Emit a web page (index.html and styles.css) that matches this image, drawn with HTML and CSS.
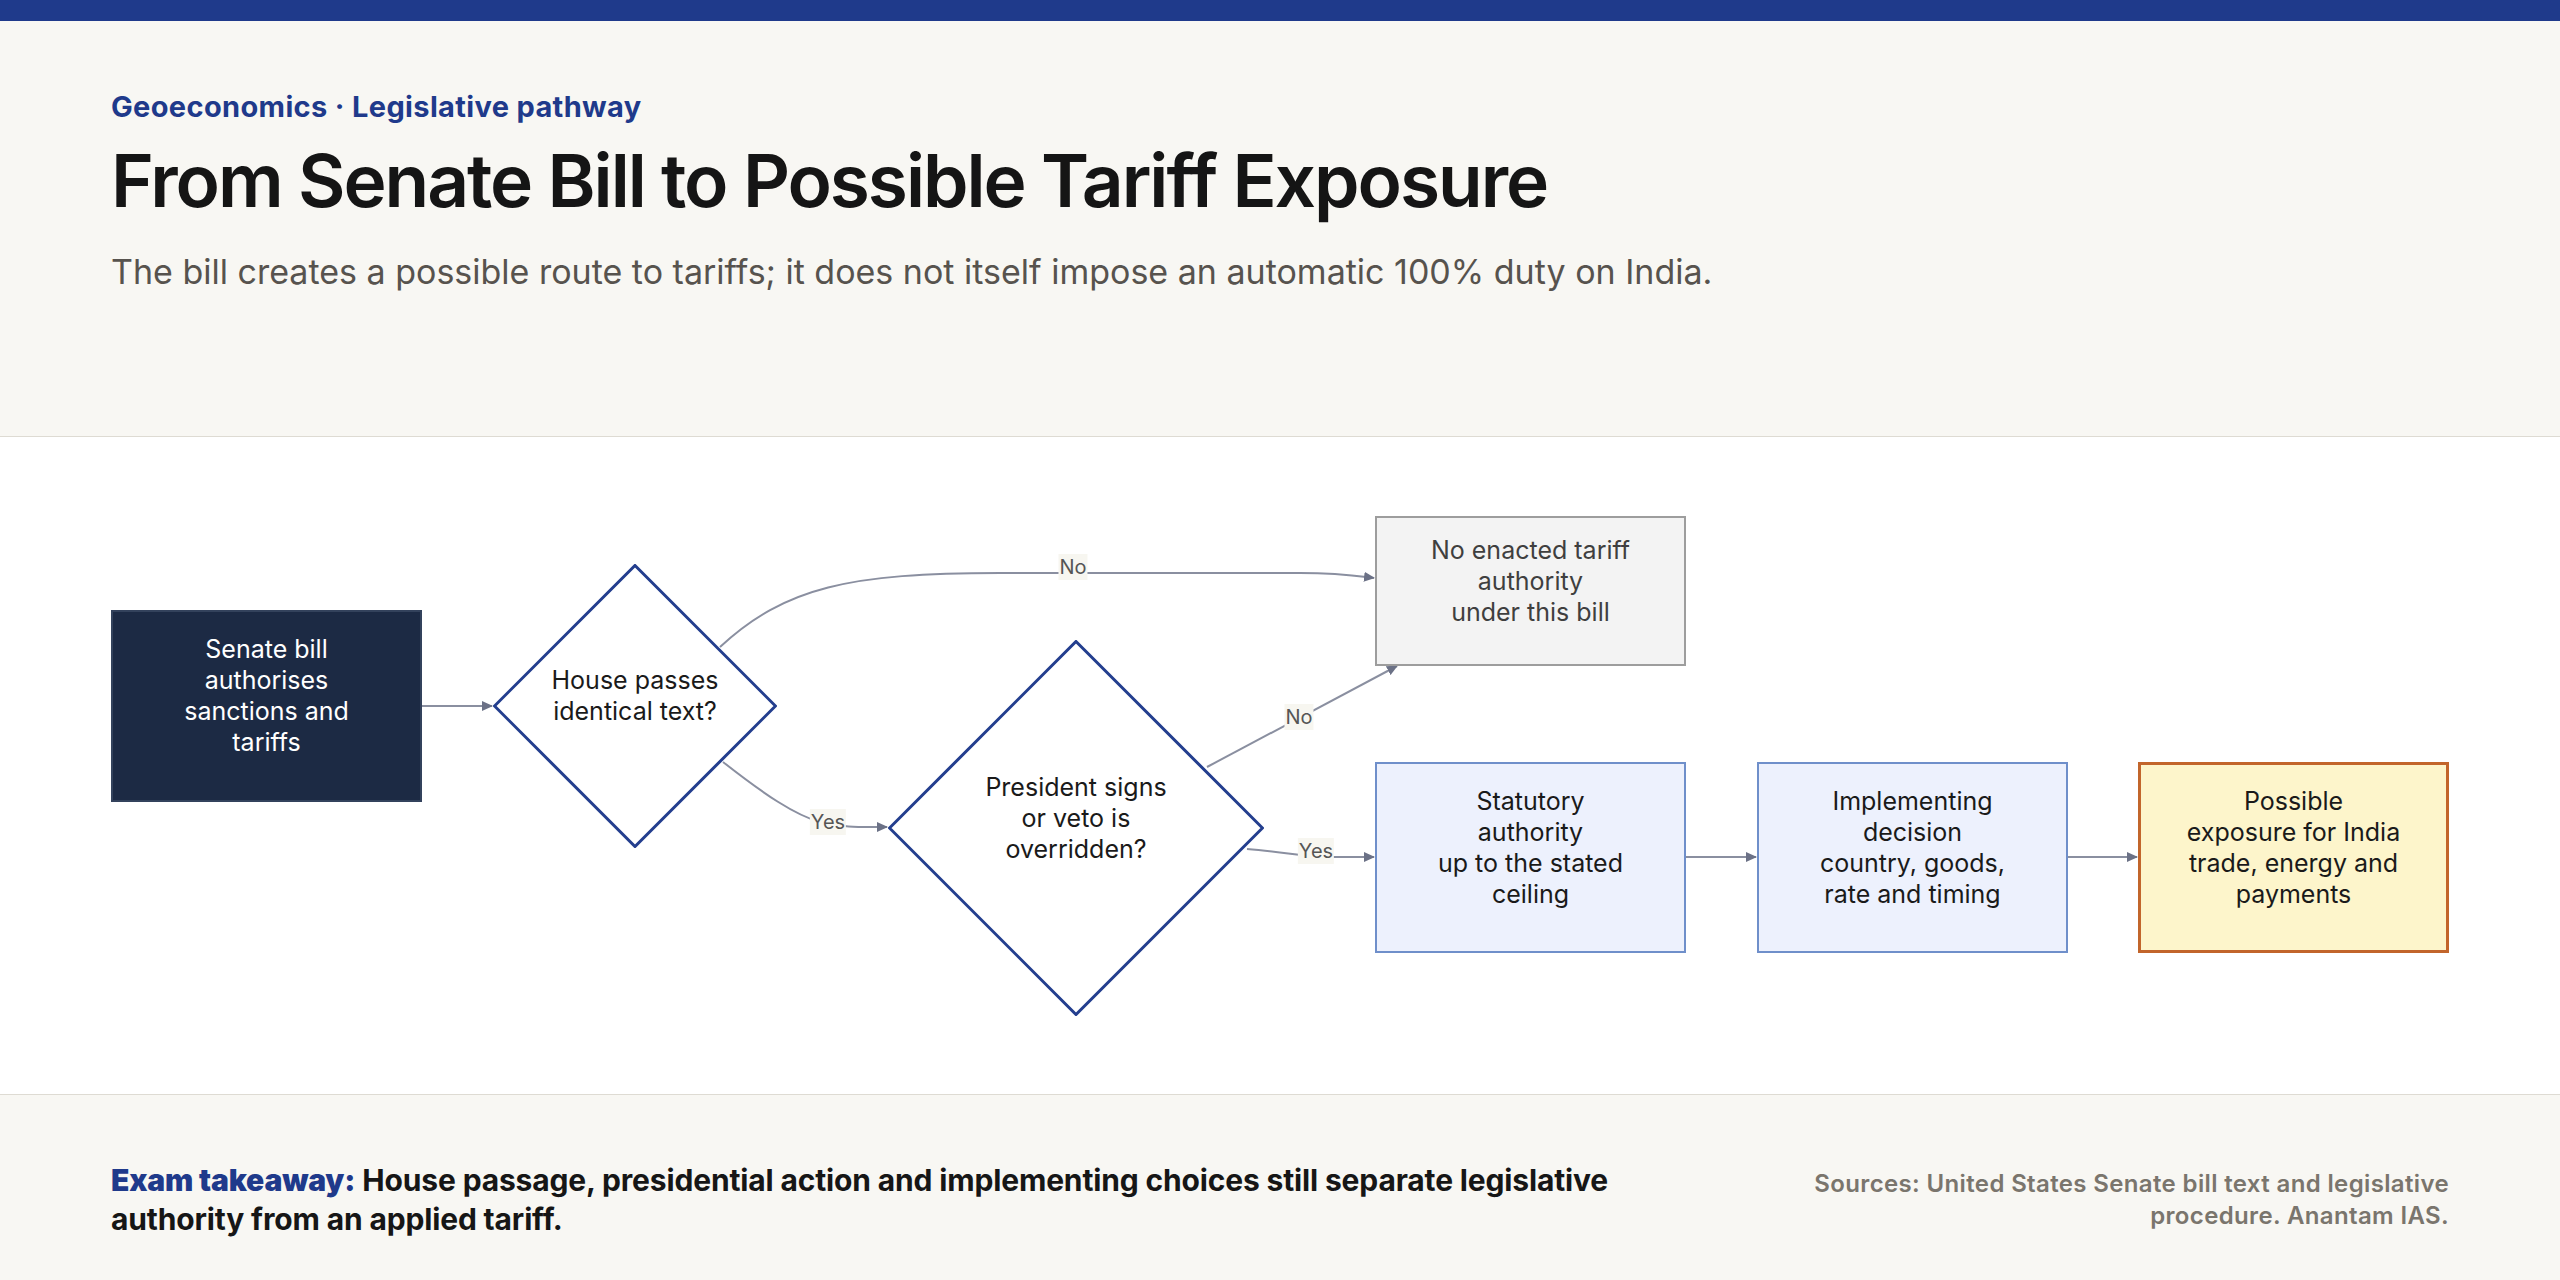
FILE: index.html
```html
<!DOCTYPE html>
<html lang="en">
<head>
<meta charset="utf-8">
<title>From Senate Bill to Possible Tariff Exposure</title>
<link rel="stylesheet" href="styles.css">
</head>
<body>
<div class="topbar"></div>
<header class="head">
  <p class="eyebrow">Geoeconomics · Legislative pathway</p>
  <h1 class="title">From Senate Bill to Possible Tariff Exposure</h1>
  <p class="sub">The bill creates a possible route to tariffs; it does not itself impose an automatic 100% duty on India.</p>
</header>
<main class="diagram">
  <svg class="edges" viewBox="0 0 2560 657" width="2560" height="657">
    <defs>
      <marker id="arr" markerUnits="userSpaceOnUse" markerWidth="11" markerHeight="10" refX="10" refY="5" orient="auto">
        <path class="tip" d="M0,0 L11,5 L0,10 z"/>
      </marker>
    </defs>
    <path class="edge" d="M422,269 L492,269" marker-end="url(#arr)"/>
    <path class="edge" d="M720,210 C785,150 850,136 1000,136 L1300,136 C1340,136 1358,139 1374,141" marker-end="url(#arr)"/>
    <path class="edge" d="M723,325 C765,358 795,378 820,385 C845,391 860,390 887,390" marker-end="url(#arr)"/>
    <path class="edge" d="M1207,330 L1397,229" marker-end="url(#arr)"/>
    <path class="edge" d="M1247,412 C1285,415 1305,420 1335,420 L1374,420" marker-end="url(#arr)"/>
    <path class="edge" d="M1686,420 L1756,420" marker-end="url(#arr)"/>
    <path class="edge" d="M2068,420 L2137,420" marker-end="url(#arr)"/>
  </svg>

  <div class="node box dark n-senate"><span>Senate bill<br>authorises<br>sanctions and<br>tariffs</span></div>

  <div class="node diamond n-house">
    <svg class="shape" viewBox="0 0 284 284"><polygon points="142,1.5 282.5,142 142,282.5 1.5,142"/></svg>
    <span>House passes<br>identical text?</span>
  </div>

  <div class="node diamond n-pres">
    <svg class="shape" viewBox="0 0 376 376"><polygon points="188,1.5 374.5,188 188,374.5 1.5,188"/></svg>
    <span>President signs<br>or veto is<br>overridden?</span>
  </div>

  <div class="node box grey n-none"><span>No enacted tariff<br>authority<br>under this bill</span></div>
  <div class="node box blue n-stat"><span>Statutory<br>authority<br>up to the stated<br>ceiling</span></div>
  <div class="node box blue n-impl"><span>Implementing<br>decision<br>country, goods,<br>rate and timing</span></div>
  <div class="node box gold n-poss"><span>Possible<br>exposure for India<br>trade, energy and<br>payments</span></div>

  <div class="elabel l-no1">No</div>
  <div class="elabel l-yes1">Yes</div>
  <div class="elabel l-no2">No</div>
  <div class="elabel l-yes2">Yes</div>
</main>
<footer class="foot">
  <p class="takeaway"><strong>Exam takeaway:</strong> House passage, presidential action and implementing choices still separate legislative authority from an applied tariff.</p>
  <p class="sources">Sources: United States Senate bill text and legislative procedure. Anantam IAS.</p>
</footer>
</body>
</html>
```

FILE: styles.css
```css
* { box-sizing: border-box; }
html, body { margin: 0; padding: 0; }
body {
  width: 2560px;
  height: 1280px;
  overflow: hidden;
  background: #f8f7f3;
  font-family: Inter, "Noto Sans", "Liberation Sans", sans-serif;
  color: #161616;
}

.topbar { height: 21px; background: #1f3a8b; }

.head {
  height: 416px;
  padding: 68px 111px 0;
  background: #f8f7f3;
  border-bottom: 1px solid #dedbd3;
}
.eyebrow {
  margin: 0;
  font-size: 29px;
  line-height: 35px;
  font-weight: 700;
  color: #1f3a8b;
  letter-spacing: 0.012em;
}
.title {
  margin: 17px 0 0;
  font-size: 73px;
  line-height: 80px;
  font-weight: 600;
  letter-spacing: -0.028em;
  color: #151515;
}
.sub {
  margin: 30px 0 0;
  font-size: 34px;
  line-height: 42px;
  font-weight: 400;
  color: #57534e;
  letter-spacing: 0;
}

.diagram {
  position: relative;
  height: 657px;
  background: #ffffff;
}
.edges { position: absolute; left: 0; top: 0; }
.edge { fill: none; stroke: #8a8fa0; stroke-width: 2; }
.tip { fill: #6b7186; stroke: none; }

.node {
  position: absolute;
  display: flex;
  align-items: center;
  justify-content: center;
  text-align: center;
  font-size: 25px;
  line-height: 31px;
  color: #1a1a1a;
}
.node span { position: relative; padding-bottom: 20px; }
.box { width: 311px; height: 191px; border: 2px solid; }
.dark { background: #1c2a44; border-color: #33425c; color: #ffffff; }
.grey { background: #f3f3f3; border-color: #9d9d9d; color: #3f3f3f; height: 150px; }
.blue { background: #edf1fd; border-color: #6f8fca; }
.gold { background: #fdf5cb; border-color: #c2652b; border-width: 3px; }

.n-senate { left: 111px; top: 173px; height: 192px; }
.n-none { left: 1375px; top: 79px; }
.n-stat { left: 1375px; top: 325px; }
.n-impl { left: 1757px; top: 325px; }
.n-poss { left: 2138px; top: 325px; }

.diamond .shape { position: absolute; left: 0; top: 0; width: 100%; height: 100%; }
.diamond polygon { fill: #ffffff; stroke: #233e8e; stroke-width: 3; }
.n-house { left: 493px; top: 127px; width: 284px; height: 284px; }
.n-pres { left: 888px; top: 203px; width: 376px; height: 376px; }

.elabel {
  position: absolute;
  transform: translate(-50%, -50%);
  background: #f7f6f0;
  color: #555555;
  font-size: 20px;
  line-height: 26px;
  padding: 0 1px;
}
.l-no1 { left: 1073px; top: 130px; }
.l-yes1 { left: 828px; top: 385px; }
.l-no2 { left: 1299px; top: 280px; }
.l-yes2 { left: 1316px; top: 414px; }

.foot {
  height: 186px;
  border-top: 1px solid #dedbd3;
  background: #f8f7f3;
  padding: 24px 111px 0;
  display: flex;
  justify-content: space-between;
  align-items: center;
}
.takeaway {
  margin: 0;
  max-width: 1590px;
  font-size: 30px;
  line-height: 39px;
  font-weight: 700;
  color: #161616;
  letter-spacing: -0.005em;
}
.takeaway strong { font-weight: 900; color: #1f3a8b; }
.sources {
  margin: 0;
  max-width: 700px;
  text-align: right;
  font-size: 24px;
  line-height: 32px;
  font-weight: 600;
  color: #7a756d;
  letter-spacing: 0.015em;
}
```
